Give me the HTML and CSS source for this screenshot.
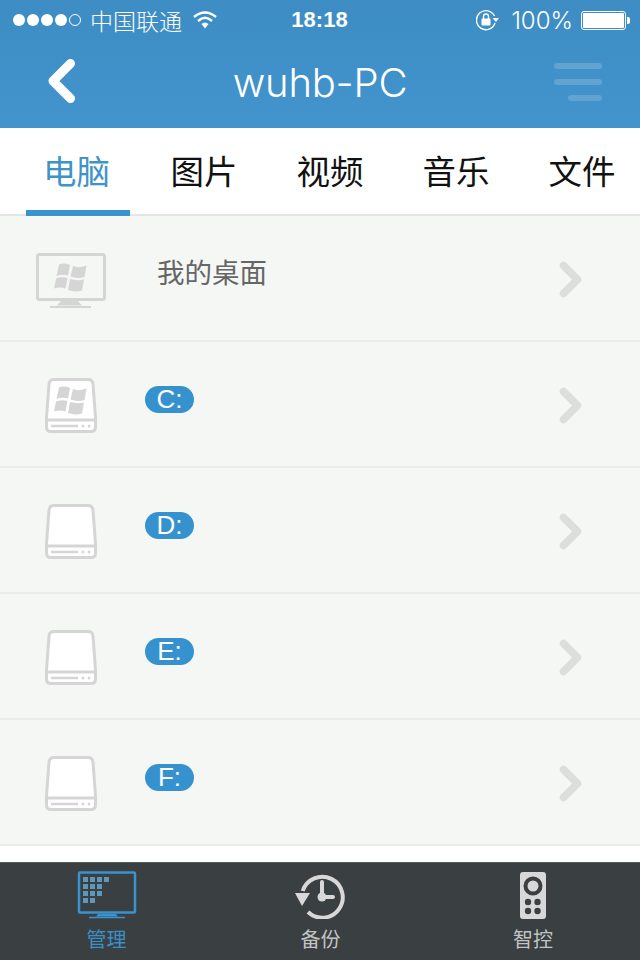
FILE: index.html
```html
<!DOCTYPE html>
<html>
    <head>
        <title>wuhb-PC</title>
        <link rel="stylesheet" href="styles.css">
    </head>
    <body>
        <svg width="0" height="0" class="defs">
            <defs>
                <g id="winLogo">
                    <path d="M4 1.500 Q9 -0.500 15 2 L13 12.500 Q7 11 1.500 13 Z"/>
                    <path d="M18 3 Q23 5.500 31.500 2.500 L29.500 14 Q22 16 15.500 13.500 Z"/>
                    <path d="M1 15.500 Q7 13.500 12.500 15 L10.500 25.500 Q5 23.500 -1 25.500 Z"/>
                    <path d="M15 16 Q22 18 29 16.500 L27 27.500 Q20 29.500 13 27 Z"/>
                </g>
                <g id="drive">
                    <path d="M9 1.500 H43 Q47.500 1.500 48 6 L50.500 40 V49 Q50.500 53.500 46 53.500 H6 Q1.500 53.500 1.500 49 V40 L4 6 Q4.500 1.500 9 1.500 Z" fill="#fff" stroke="#d5d5d5" stroke-width="3"/>
                    <path d="M2 42 H50" stroke="#d5d5d5" stroke-width="3"/>
                    <path d="M6 48 H33" stroke="#d5d5d5" stroke-width="2.500"/>
                    <circle cx="38" cy="48" r="1.500" fill="#d5d5d5"/>
                    <circle cx="44" cy="48" r="1.500" fill="#d5d5d5"/>
                </g>
                <path id="chevron" d="M5.500 5.500 L19.500 19.500 L5.500 33.500" fill="none" stroke="#dcdedc" stroke-width="7.500" stroke-linecap="round" stroke-linejoin="round"/>
            </defs>
        </svg>

        <div class="header">
            <div class="statusBar">
                <div class="statusLeft">
                    <span class="signal">
                        <i class="dot"></i><i class="dot"></i><i class="dot"></i><i class="dot"></i><i class="dot empty"></i>
                    </span>
                    <span class="carrier">中国联通</span>
                    <svg class="wifi" width="26" height="20" viewBox="0 0 26 20">
                        <path d="M2 7 Q13 -2 24 7" fill="none" stroke="#fff" stroke-width="2.500"/>
                        <path d="M6 11 Q13 4.500 20 11" fill="none" stroke="#fff" stroke-width="2.500"/>
                        <path d="M9.500 14 Q13 11 16.500 14 L13 18.500 Z" fill="#fff"/>
                    </svg>
                </div>
                <span class="clock">18:18</span>
                <div class="statusRight">
                    <svg class="lock" width="24" height="22" viewBox="0 0 24 22">
                        <path d="M19 14 A9.500 9.500 0 1 1 18.500 7" fill="none" stroke="#fff" stroke-width="1.400"/>
                        <path d="M16.500 9 H23 L20 13 Z" fill="#fff"/>
                        <rect x="5.500" y="9.500" width="9" height="7" rx="1" fill="#fff"/>
                        <path d="M7.500 10 V7.500 A2.500 2.500 0 0 1 12.500 7.500 V10" fill="none" stroke="#fff" stroke-width="1.400"/>
                    </svg>
                    <span class="percent">100%</span>
                    <span class="battery"><span class="batteryFill"></span></span>
                    <span class="batteryTip"></span>
                </div>
            </div>
            <div class="navBar">
                <svg class="back" width="32" height="46" viewBox="0 0 32 46">
                    <path d="M24.500 5.500 L7 23 L24.500 40.500" fill="none" stroke="#fff" stroke-width="9" stroke-linecap="round" stroke-linejoin="round"/>
                </svg>
                <span class="title">wuhb-PC</span>
                <div class="menu">
                    <span class="menuLine"></span>
                    <span class="menuLine"></span>
                    <span class="menuLine short"></span>
                </div>
            </div>
        </div>

        <div class="tabs">
            <a class="tab active">电脑</a>
            <a class="tab">图片</a>
            <a class="tab">视频</a>
            <a class="tab">音乐</a>
            <a class="tab">文件</a>
        </div>

        <div class="list">
            <div class="row">
                <svg class="monitor" width="70" height="56" viewBox="0 0 70 56">
                    <rect x="1.500" y="1.500" width="67" height="45" rx="2" fill="none" stroke="#d5d5d5" stroke-width="3"/>
                    <use href="#winLogo" x="19" y="10" fill="#d5d5d5"/>
                    <path d="M25 48 H42 L46 52.500 H21 Z" fill="#d5d5d5"/>
                    <path d="M14 54 H55" stroke="#d5d5d5" stroke-width="2"/>
                </svg>
                <span class="rowName">我的桌面</span>
                <svg class="chevron" width="24" height="38" viewBox="0 0 24 38"><use href="#chevron"/></svg>
            </div>
            <div class="row">
                <svg class="disk" width="52" height="55" viewBox="0 0 52 55">
                    <use href="#drive"/>
                    <use href="#winLogo" x="10" y="8" fill="#d5d5d5"/>
                </svg>
                <span class="pill">C:</span>
                <svg class="chevron" width="24" height="38" viewBox="0 0 24 38"><use href="#chevron"/></svg>
            </div>
            <div class="row">
                <svg class="disk" width="52" height="55" viewBox="0 0 52 55"><use href="#drive"/></svg>
                <span class="pill">D:</span>
                <svg class="chevron" width="24" height="38" viewBox="0 0 24 38"><use href="#chevron"/></svg>
            </div>
            <div class="row">
                <svg class="disk" width="52" height="55" viewBox="0 0 52 55"><use href="#drive"/></svg>
                <span class="pill">E:</span>
                <svg class="chevron" width="24" height="38" viewBox="0 0 24 38"><use href="#chevron"/></svg>
            </div>
            <div class="row">
                <svg class="disk" width="52" height="55" viewBox="0 0 52 55"><use href="#drive"/></svg>
                <span class="pill">F:</span>
                <svg class="chevron" width="24" height="38" viewBox="0 0 24 38"><use href="#chevron"/></svg>
            </div>
        </div>

        <div class="spacer"></div>

        <div class="bottomBar">
            <div class="bottomItem active">
                <svg width="60" height="48" viewBox="0 0 60 48">
                    <rect x="2" y="1.500" width="56" height="40" rx="1" fill="none" stroke="#3a93cf" stroke-width="2.500"/>
                    <g fill="#5f97ba">
                        <rect x="6" y="6" width="5" height="5"/><rect x="13" y="6" width="5" height="5"/><rect x="20" y="6" width="5" height="5"/><rect x="27" y="6" width="5" height="5"/>
                        <rect x="6" y="13" width="5" height="5"/><rect x="13" y="13" width="5" height="5"/><rect x="20" y="13" width="5" height="5"/>
                        <rect x="6" y="20" width="5" height="5"/><rect x="13" y="20" width="5" height="5"/><rect x="20" y="20" width="5" height="5"/>
                        <rect x="6" y="27" width="5" height="5"/><rect x="13" y="27" width="5" height="5"/>
                    </g>
                    <path d="M21 43 H39 L41 45.500 H19 Z" fill="#3a93cf"/>
                    <path d="M12 46.500 H48" stroke="#3a93cf" stroke-width="1.500"/>
                </svg>
                <span>管理</span>
            </div>
            <div class="bottomItem wide">
                <svg width="54" height="48" viewBox="0 0 54 48">
                    <path d="M8.700 20 A20.500 20.500 0 1 1 14 41" fill="none" stroke="#d8d8d8" stroke-width="4"/>
                    <path d="M1 22 H16 L8 35 Z" fill="#d8d8d8"/>
                    <path d="M28 11 V26 H39" fill="none" stroke="#d8d8d8" stroke-width="4" stroke-linecap="round"/>
                    <circle cx="28" cy="26" r="4.500" fill="#d8d8d8"/>
                </svg>
                <span>备份</span>
            </div>
            <div class="bottomItem narrow">
                <svg width="28" height="48" viewBox="0 0 28 48">
                    <rect x="1" y="1" width="26" height="47" rx="3" fill="#d8d8d8"/>
                    <circle cx="14" cy="15" r="7.500" fill="none" stroke="#3a3f41" stroke-width="4"/>
                    <g fill="#3a3f41">
                        <circle cx="9" cy="31" r="3.200"/><circle cx="18.500" cy="31" r="3.200"/>
                        <circle cx="9" cy="40" r="3.200"/><circle cx="18.500" cy="40" r="3.200"/>
                    </g>
                </svg>
                <span>智控</span>
            </div>
        </div>
    </body>
</html>
```

FILE: styles.css
```css
html, body{
    margin: 0;
    padding: 0;
}

body{
    width: 640px;
    height: 960px;
    overflow: hidden;
    display: flex;
    flex-direction: column;
    background-color: #ffffff;
    font-family: "Noto Sans CJK SC", "Liberation Sans", sans-serif;
}

.defs{
    display: block;
    height: 0;
}

.header{
    height: 128px;
    flex: none;
    background: linear-gradient(#3d8dc4, #4394cd);
    color: #ffffff;
}

.statusBar{
    height: 40px;
    display: grid;
    grid-template-columns: 1fr auto 1fr;
    align-items: center;
    padding: 0 10px 0 13px;
}

.statusLeft, .statusRight{
    display: flex;
    align-items: center;
}

.statusRight{
    justify-content: flex-end;
}

.signal{
    display: flex;
    gap: 2px;
}

.dot{
    width: 12px;
    height: 12px;
    border-radius: 50%;
    background-color: #ffffff;
    box-sizing: border-box;
}

.dot.empty{
    background: none;
    border: 1px solid #ffffff;
}

.carrier{
    font-size: 23px;
    font-weight: 300;
    margin-left: 9px;
    line-height: 40px;
}

.wifi{
    margin-left: 10px;
}

.clock{
    line-height: 40px;
    font-family: "Liberation Sans", sans-serif;
    font-size: 22px;
    font-weight: bold;
    margin-left: -4px;
}

.percent{
    font-family: "Inter", sans-serif;
    font-weight: 300;
    font-size: 24px;
    margin-left: 11px;
}

.battery{
    width: 41px;
    height: 15px;
    border: 1px solid #ffffff;
    border-radius: 3px;
    margin-left: 8px;
    padding: 1px;
    display: flex;
}

.batteryFill{
    flex: 1;
    background-color: #ffffff;
    border-radius: 1px;
}

.batteryTip{
    width: 3px;
    height: 7px;
    margin-left: 1px;
    background-color: #ffffff;
    border-radius: 0 2px 2px 0;
}

.navBar{
    height: 88px;
    display: grid;
    grid-template-columns: 1fr auto 1fr;
    align-items: center;
    padding: 0 38px 6px 46px;
    box-sizing: border-box;
}

.title{
    font-family: "Inter", sans-serif;
    font-weight: 300;
    font-size: 40px;
    letter-spacing: -0.200px;
    line-height: 54px;
    margin-top: 4px;
    margin-left: -8px;
}

.menu{
    display: flex;
    flex-direction: column;
    align-items: flex-end;
    gap: 10px;
    margin-top: 2px;
}

.menuLine{
    width: 48px;
    height: 6px;
    border-radius: 3px;
    background-color: #62a3d0;
}

.menuLine.short{
    width: 34px;
}

.tabs{
    height: 88px;
    flex: none;
    box-sizing: border-box;
    padding-left: 15px;
    display: flex;
    background-color: #ffffff;
    border-bottom: 2px solid #e4e6e5;
}

.tab{
    width: 126px;
    flex: none;
    text-align: center;
    font-size: 33.500px;
    line-height: 84px;
    color: #111111;
    box-sizing: border-box;
}

.tab.active{
    width: 104px;
    margin: 0 11px;
    padding-right: 3px;
    height: 88px;
    color: #3f93c9;
    border-bottom: 6px solid #3a93cf;
}

.list{
    flex: none;
}

.row{
    height: 126px;
    box-sizing: border-box;
    display: flex;
    align-items: flex-start;
    background-color: #f4f7f4;
    border-bottom: 2px solid #e9ecea;
}

.monitor{
    margin: 37px 0 0 36px;
    flex: none;
}

.disk{
    margin: 36px 0 0 45px;
    flex: none;
}

.rowName{
    margin: 35px 0 0 51px;
    font-size: 27.500px;
    line-height: 40px;
    color: #666666;
}

.pill{
    margin: 44px 0 0 48px;
    width: 49px;
    height: 27px;
    border-radius: 14px;
    background-color: #3592cf;
    color: #ffffff;
    text-align: center;
    font-family: "Liberation Sans", sans-serif;
    font-size: 26px;
    line-height: 27px;
}

.chevron{
    margin: 44px 58px 0 auto;
    flex: none;
}

.spacer{
    flex: 1;
}

.bottomBar{
    height: 98px;
    flex: none;
    display: flex;
    background-color: #3a3f41;
    border-top: 1px solid #555a5c;
    box-sizing: border-box;
}

.bottomItem{
    flex: none;
    width: 213px;
    display: flex;
    flex-direction: column;
    align-items: center;
    padding-top: 8px;
    box-sizing: border-box;
    color: #c2c4c4;
    font-size: 20px;
    line-height: 26px;
}

.bottomItem.wide{
    width: 215px;
}

.bottomItem.narrow{
    width: 210px;
}

.bottomItem span{
    margin-top: 7px;
}

.bottomItem.active{
    color: #3a8fc6;
}
```
